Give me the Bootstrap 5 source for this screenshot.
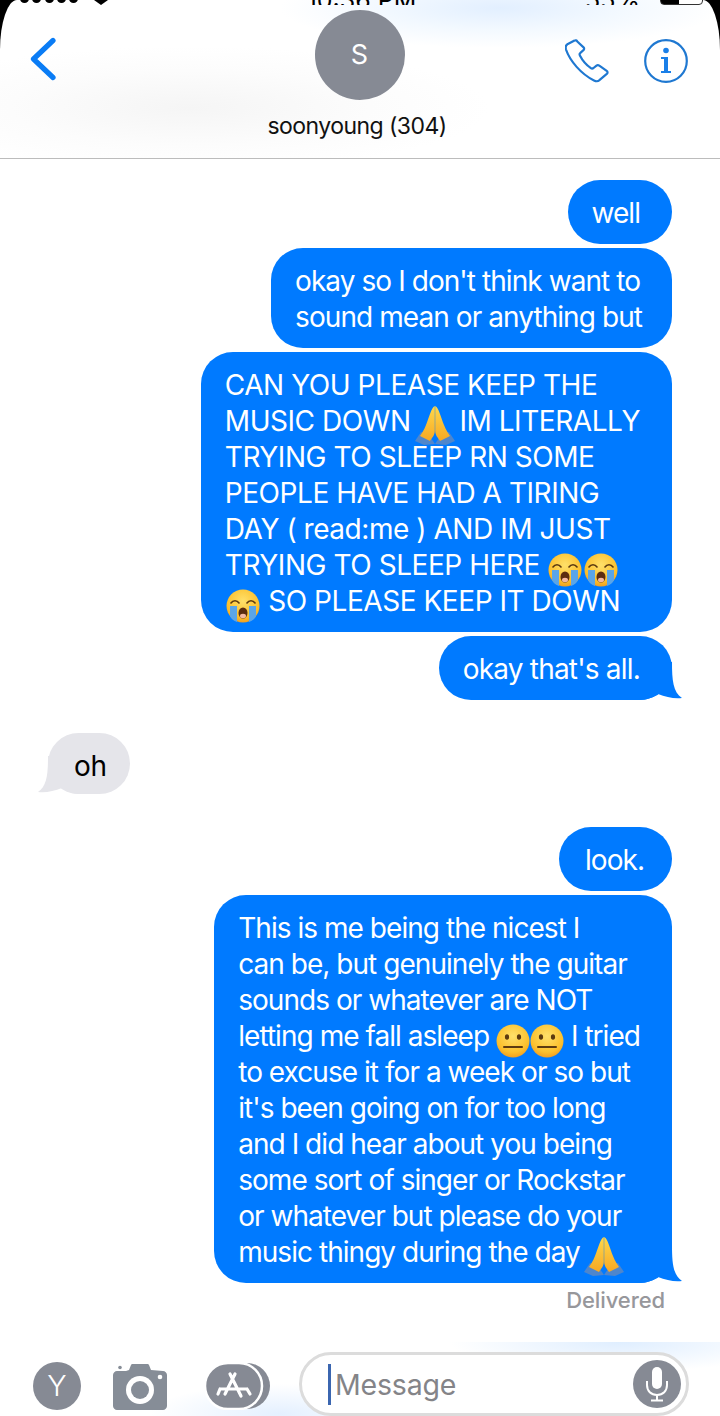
<!DOCTYPE html>
<html lang="en">
<head>
<meta charset="utf-8">
<title>soonyoung (304)</title>
<link href="https://cdn.jsdelivr.net/npm/bootstrap@5.3.0/dist/css/bootstrap.min.css" rel="stylesheet">
<style>
html,body{height:100%;}
body{background:#000;font-family:Inter,"Liberation Sans",sans-serif;overflow:hidden;}
.phone-screen{width:720px;height:1416px;background:#fff;border-radius:17px 17px 0 0/50px 50px 0 0;overflow:hidden;}
.top-area{height:159px;border-bottom:1px solid #bcbcbc;background:
 radial-gradient(ellipse 300px 62px at 190px 108px,#f5f5f5 0%,rgba(250,250,250,.6) 60%,rgba(255,255,255,0) 100%),
 radial-gradient(ellipse 220px 40px at 500px 8px,#e2efff 0%,rgba(235,245,255,.6) 55%,rgba(255,255,255,0) 100%);}
.status-strip{height:5px;overflow:hidden;padding:0 17px 0 20px;font-size:25px;line-height:26px;color:#000;}
.status-side{flex:1 1 0;}
.status-dots{width:58px;height:6px;}
.status-dots i{display:block;width:9px;height:9px;border-radius:50%;background:#000;flex:none;margin-bottom:2px;}
.status-wifi-b{width:14px;height:5px;background:#000;clip-path:polygon(0 0,100% 0,50% 100%);margin-left:16px;}
.status-time{font-size:25px;margin-bottom:-8px;}
.status-batt{width:43px;height:12px;border:1.5px solid #333;border-radius:4px;margin-left:20px;background:linear-gradient(90deg,#000 45%,#fff 45%);flex:none;}
.nav-row{height:95px;}
.nav-side{flex:1 1 0;}
.nav-left{padding-left:29px;padding-top:32px;}
.nav-right{padding-right:32px;padding-top:34px;gap:35px;}
.nav-center{margin-top:5px;padding-left:2px;}
.contact-dot{width:90px;height:90px;background:#868a94;color:#fff;font-size:27px;}
.contact-name{font-size:23px;line-height:28px;margin:12px 5px 0 0;letter-spacing:-.55px;color:#111;}
.chat-area{padding:21px 48px 0;font-size:28px;line-height:36px;letter-spacing:-.96px;}
.msg-bubble{padding:15px 32px 13px 24px;border-radius:32px;white-space:nowrap;position:relative;isolation:isolate;}
.msg-caps{letter-spacing:-.45px;}
.msg-snug{padding-right:30px;letter-spacing:-.93px;}
.msg-look{padding-left:26px;padding-right:28px;}
.msg-last{letter-spacing:-.8px;}
.msg-out{background:#007aff;color:#fff;}
.msg-in{background:#e5e5ea;color:#000;padding:15px 23px 10px 26px;border-radius:31px;margin:29px 0;letter-spacing:-.3px;}
.msg-tail{position:absolute;right:-12px;bottom:0;width:44px;height:48px;z-index:-1;}
.msg-tail-in{left:-12px;right:auto;transform:scaleX(-1);}
.emo{display:inline-block;width:34px;height:34px;vertical-align:-6px;margin:-6px 0;}
.emo-sob{margin:-6px 1px;}
.emo-wide{width:40px;height:40px;vertical-align:-6px;margin:-8px -3px;}
.delivered-tag{font-size:22px;line-height:28px;letter-spacing:-.1px;color:#97979b;margin:-1px 7px 0 0;font-weight:500;}
.bottom-area{height:74px;padding:14px 30px 0 33px;background:
 radial-gradient(ellipse 170px 30px at 620px 0px,#dfeeff 0%,rgba(255,255,255,0) 100%),
 radial-gradient(ellipse 130px 30px at 280px 72px,#e4f0ff 0%,rgba(255,255,255,0) 100%);}
.tool-letter{width:48px;height:48px;background:#868a94;color:#fff;font-size:29px;font-weight:300;}
.tool-cam{margin:2px 0 0 32px;}
.tool-app{margin:0 28px 0 38px;}
.msg-input{width:390px;height:64px;margin-top:-4px;border:3px solid #dcdcdc;border-radius:32px;background:#fff;padding:0 5px 0 26px;}
.msg-caret{width:3px;height:41px;background:#3b66b0;margin-right:4px;}
.msg-placeholder{font-size:28.5px;letter-spacing:-.2px;color:#848488;padding-top:3px;}
.mic-dot{width:48px;height:48px;background:#868a94;}
</style>
</head>
<body>
<svg width="0" height="0" class="d-block position-absolute">
 <defs>
  <radialGradient id="yel" cx=".5" cy=".35" r=".7"><stop offset="0" stop-color="#ffe06a"/><stop offset=".7" stop-color="#fbc02d"/><stop offset="1" stop-color="#f0951c"/></radialGradient>
  <linearGradient id="hand" x1="0" y1="0" x2="0" y2="1"><stop offset="0" stop-color="#ffd84a"/><stop offset="1" stop-color="#f7a823"/></linearGradient>
  <symbol id="e-pray" viewBox="0 0 40 40">
   <path d="M0 36 6 27 14 30 20 39 9 40Z" fill="#4f86cc"/><path d="M40 36 34 27 26 30 20 39 31 40Z" fill="#4f86cc"/>
   <path d="M19.800 1C16 3 14 13 11 20 9 25 7 28 5 31L15 36C17 33 19.800 30 19.800 26Z" fill="url(#hand)"/>
   <path d="M20.200 1C24 3 26 13 29 20 31 25 33 28 35 31L25 36C23 33 20.200 30 20.200 26Z" fill="url(#hand)"/>
  </symbol>
  <symbol id="e-sob" viewBox="0 0 34 34">
   <circle cx="17" cy="17" r="16.500" fill="url(#yel)"/>
   <path d="M4 17h7v16c-3-1-6-3-7-6ZM23 17h7v10c-1 3-4 5-7 6Z" fill="#5aa5e8"/>
   <path d="M5 14c2-3 6-3 8 0M21 14c2-3 6-3 8 0" fill="none" stroke="#5c3a10" stroke-width="1.600" stroke-linecap="round"/>
   <ellipse cx="17" cy="24" rx="4.500" ry="5.500" fill="#5c2d10"/><ellipse cx="17" cy="27" rx="3" ry="2.200" fill="#f6b9a0"/>
  </symbol>
  <symbol id="e-flat" viewBox="0 0 34 34">
   <circle cx="17" cy="17" r="16.500" fill="url(#yel)"/>
   <ellipse cx="11" cy="13" rx="2.100" ry="2.800" fill="#5c3a10"/><ellipse cx="23" cy="13" rx="2.100" ry="2.800" fill="#5c3a10"/>
   <rect x="7" y="22" width="20" height="1.900" rx="1" fill="#5c3a10"/>
  </symbol>
  <symbol id="tail" viewBox="0 0 44 48"><path d="M32 10C32 28 33 40 42 46 34 47 26 45 18 42 12 46 6 48 0 48V10Z"/></symbol>
 </defs>
</svg>

<div class="phone-screen d-flex flex-column">
 <header class="top-area flex-shrink-0">
  <div class="status-strip d-flex align-items-end">
   <div class="status-side d-flex align-items-end">
    <div class="status-dots d-flex justify-content-between align-items-end"><i></i><i></i><i></i><i></i><i></i></div>
    <span class="status-wifi-b"></span>
   </div>
   <div class="status-time">10:36 PM</div>
   <div class="status-side d-flex align-items-end justify-content-end"><span class="status-time">55%</span><span class="status-batt"></span></div>
  </div>
  <div class="nav-row d-flex align-items-start">
   <div class="nav-side nav-left">
    <svg width="28" height="44" viewBox="0 0 28 44" fill="none"><path d="M24 3.500 4.500 22 24 40.500" stroke="#0a7cf5" stroke-width="5.200" stroke-linecap="round" stroke-linejoin="round"/></svg>
   </div>
   <div class="nav-center d-flex flex-column align-items-center">
    <div class="contact-dot rounded-circle d-flex align-items-center justify-content-center flex-shrink-0">S</div>
    <div class="contact-name">soonyoung (304)</div>
   </div>
   <div class="nav-side nav-right d-flex align-items-start justify-content-end">
    <svg width="44" height="44" viewBox="0 0 44 44" fill="none"><path d="M9.500 1.600 2.400 5.300C.6 6.400.4 8.500 1 10.600 5 22 16 35 29 41.500c2 1 4 1 5.400-.3l7.400-6.300c1-.9 1-2.200-.1-3l-7.400-5.300c-.9-.6-2-.6-2.800 0l-3 2.400c-.8.6-1.800.7-2.600.1-4.500-3.200-8.500-7.700-11-12.700-.5-1-.3-2 .5-2.600l3-2.600c.7-.7.9-1.700.4-2.600L12.300 2.500c-.6-1.100-1.800-1.500-2.800-.9Z" stroke="#1f78d1" stroke-width="2.200" stroke-linejoin="round"/></svg>
    <svg width="44" height="44" viewBox="0 0 44 44" fill="none"><circle cx="22" cy="22" r="20.800" stroke="#1f78d1" stroke-width="2.200"/><circle cx="22" cy="11.500" r="2.800" fill="#1a7fe8"/><path d="M17 18h7v14h3v2H17v-2h3V20h-3Z" fill="#1a7fe8"/></svg>
   </div>
  </div>
 </header>

 <main class="chat-area flex-grow-1 d-flex flex-column align-items-end gap-1">
  <div class="msg-bubble msg-out">well</div>
  <div class="msg-bubble msg-out msg-snug">okay so I don't think want to<br>sound mean or anything but</div>
  <div class="msg-bubble msg-out msg-caps">CAN YOU PLEASE KEEP THE<br>MUSIC DOWN <svg class="emo emo-wide"><use href="#e-pray"/></svg> IM LITERALLY<br>TRYING TO SLEEP RN SOME<br>PEOPLE HAVE HAD A TIRING<br>DAY ( read:me ) AND IM JUST<br>TRYING TO SLEEP HERE <svg class="emo emo-sob"><use href="#e-sob"/></svg><svg class="emo emo-sob"><use href="#e-sob"/></svg><br><svg class="emo emo-sob"><use href="#e-sob"/></svg> SO PLEASE KEEP IT DOWN</div>
  <div class="msg-bubble msg-out msg-last">okay that's all.<svg class="msg-tail" fill="#007aff"><use href="#tail"/></svg></div>
  <div class="msg-bubble msg-in align-self-start">oh<svg class="msg-tail msg-tail-in" fill="#e5e5ea"><use href="#tail"/></svg></div>
  <div class="msg-bubble msg-out msg-look">look.</div>
  <div class="msg-bubble msg-out">This is me being the nicest I<br>can be, but genuinely the guitar<br>sounds or whatever are NOT<br>letting me fall asleep <svg class="emo"><use href="#e-flat"/></svg><svg class="emo"><use href="#e-flat"/></svg> I tried<br>to excuse it for a week or so but<br>it's been going on for too long<br>and I did hear about you being<br>some sort of singer or Rockstar<br>or whatever but please do your<br>music thingy during the day <svg class="emo emo-wide"><use href="#e-pray"/></svg><svg class="msg-tail" fill="#007aff"><use href="#tail"/></svg></div>
  <div class="delivered-tag">Delivered</div>
 </main>

 <footer class="bottom-area flex-shrink-0 d-flex align-items-center">
  <div class="tool-letter rounded-circle d-flex align-items-center justify-content-center flex-shrink-0">Y</div>
  <svg class="tool-cam flex-shrink-0" width="54" height="46" viewBox="0 0 54 46"><path d="M4 7h9l3-1 2-5c.3-.7 1-1 1.700-1h14.600c.7 0 1.400.3 1.700 1l2 5 12 1c2 0 4 2 4 4v31c0 2-2 4-4 4H4c-2 0-4-2-4-4V11c0-2 2-4 4-4Z" fill="#868d97"/><circle cx="27" cy="26" r="14" fill="#fff"/><circle cx="27" cy="26" r="9" fill="#868d97"/><circle cx="47" cy="13" r="2.300" fill="#fff"/><circle cx="7" cy="3.500" r="1.800" fill="#868d97"/></svg>
  <svg class="tool-app flex-shrink-0" width="66" height="48" viewBox="0 0 66 48" fill="none">
   <rect x="9" y="1" width="56" height="46" rx="23" fill="#868a94"/>
   <rect x="0" y="1" width="57" height="46" rx="23" fill="#868a94" stroke="#fff" stroke-width="2.500"/>
   <path d="M25 12 36 34M30 12 20 32M15 27H42M42 27l3 5M15 27l-2 5" stroke="#fff" stroke-width="3.200" stroke-linecap="round"/>
  </svg>
  <div class="msg-input d-flex align-items-center flex-shrink-0">
   <span class="msg-caret flex-shrink-0"></span>
   <span class="msg-placeholder flex-grow-1">Message</span>
   <span class="mic-dot rounded-circle d-flex align-items-center justify-content-center flex-shrink-0">
    <svg width="26" height="36" viewBox="0 0 26 36" fill="none"><rect x="8" y="1" width="10" height="22" rx="5" fill="#fff"/><path d="M3 15v4c0 6 4 10 10 10s10-4 10-10v-4M13 29v5M7 34.500h12" stroke="#fff" stroke-width="2"/></svg>
   </span>
  </div>
 </footer>
</div>
<script src="https://cdn.jsdelivr.net/npm/bootstrap@5.3.0/dist/js/bootstrap.bundle.min.js"></script>
</body>
</html>
